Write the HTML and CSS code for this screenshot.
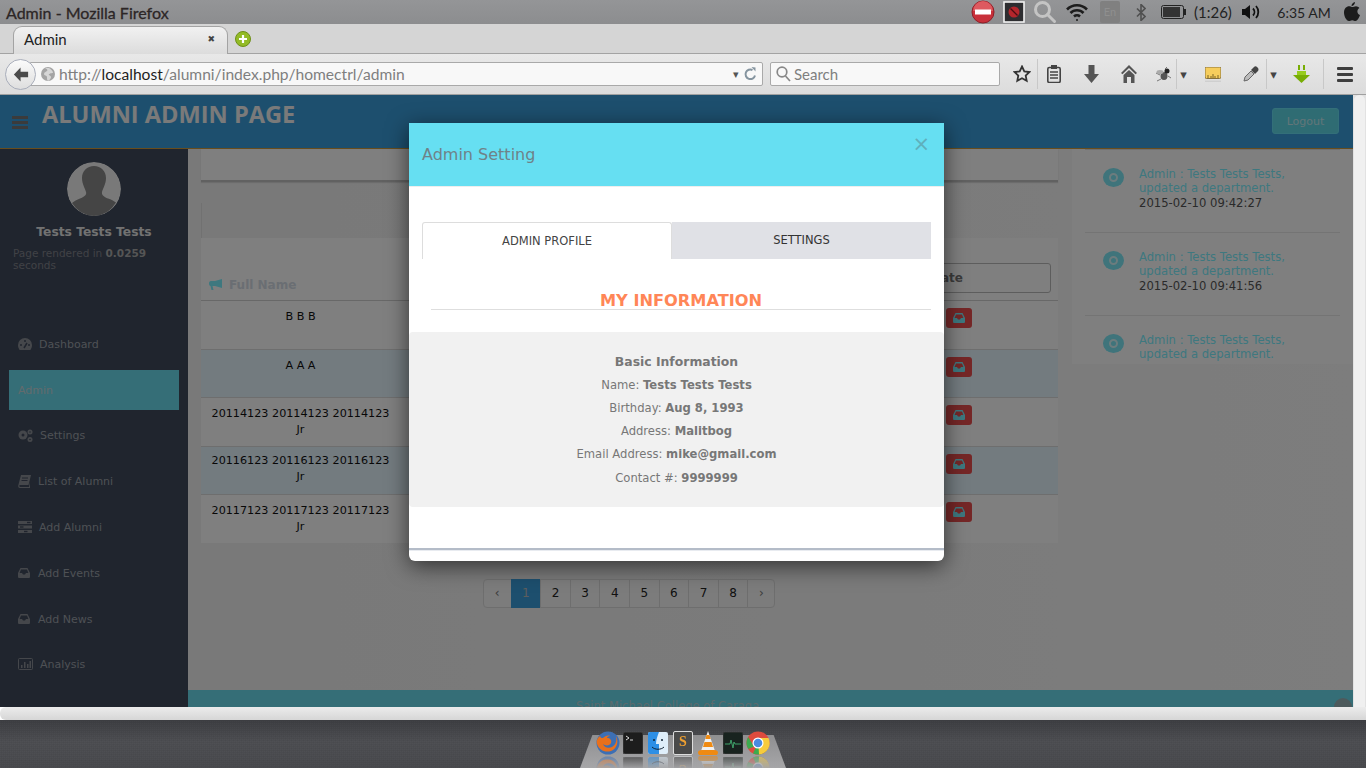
FILE: index.html
```html
<!DOCTYPE html>
<html lang="en">
<head>
<meta charset="utf-8">
<title>Admin</title>
<link rel="stylesheet" href="styles.css">
</head>
<body>
<div class="desktop">
  <header class="panel">
    <div class="panel-title">Admin - Mozilla Firefox</div>
    <div class="status">
      <span class="slot"><svg width="24" height="24" viewBox="0 0 24 24"><circle cx="12" cy="12" r="11" fill="#c8303a" stroke="#8e1f28"/><path d="M2 11a10 10 0 0 1 20 0z" fill="#dd5a60"/><rect x="4" y="9.500" width="16" height="5" fill="#fff"/></svg></span>
      <span class="slot"><svg width="22" height="22" viewBox="0 0 22 22"><rect x="1" y="1" width="20" height="20" fill="#2d2d30" stroke="#f2f2f2" stroke-width="1.600"/><circle cx="11" cy="11" r="5.500" fill="#b3262c"/><path d="M7.500 7.500l7 7" stroke="#4a0d12" stroke-width="1.300"/></svg></span>
      <span class="slot"><svg width="24" height="24" viewBox="0 0 24 24" fill="none" stroke="#c4c4c4" stroke-width="3"><circle cx="9.500" cy="9.500" r="7"/><path d="M14.500 14.500l7 7" stroke-linecap="round"/></svg></span>
      <span class="slot"><svg width="24" height="20" viewBox="0 0 24 20" fill="none" stroke="#1d1d1d" stroke-width="2.600"><path d="M2 7.500a14 14 0 0 1 20 0"/><path d="M5.500 11a9 9 0 0 1 13 0"/><path d="M9 14.500a4.500 4.500 0 0 1 6 0"/><circle cx="12" cy="18" r="1" fill="#1d1d1d" stroke="none"/></svg></span>
      <span class="slot"><span class="lang">En</span></span>
      <span class="slot"><svg width="10" height="17" viewBox="0 0 10 17" fill="none" stroke="#505050" stroke-width="1.600"><path d="M1 4.500l8 8-4 4V.5l4 4-8 8"/></svg></span>
      <span class="slot slot-battery"><svg width="25" height="14" viewBox="0 0 25 14"><rect x=".5" y=".5" width="22" height="13" rx="2" fill="none" stroke="#222"/><rect x="2" y="2" width="17" height="10" fill="#333"/><rect x="23" y="4" width="2" height="6" fill="#222"/></svg></span>
      <span class="status-text">(1:26)</span>
      <span class="slot"><svg width="20" height="18" viewBox="0 0 20 18" fill="none" stroke="#111" stroke-width="1.800"><path d="M1 6h3l5-4v14l-5-4H1z" fill="#111" stroke="none"/><path d="M12 5.500a5 5 0 0 1 0 7"/><path d="M15 3a9 9 0 0 1 0 12"/></svg></span>
      <span class="status-text status-clock">6:35 AM</span>
      <span class="slot"><svg width="16" height="20" viewBox="0 0 16 20" fill="#1c1c1c"><path d="M11 0c0 2-1.500 4-3.500 4C7.500 2 9 .5 11 0zM8 5c1.500 0 2.300-.8 4-.8 1.300 0 2.600.7 3.400 1.900-3 1.800-2.500 5.800.6 7-.8 2.400-2.600 6-4.500 6-1.200 0-1.700-.8-3.300-.8s-2.100.8-3.300.8C2.500 19 0 14.500 0 10.600 0 6.500 2.600 4.300 5 4.300c1.300 0 2.200.7 3 .7z"/></svg></span>
    </div>
  </header>

  <div class="tabstrip">
    <div class="tab"><span class="tab-label">Admin</span><span class="tab-close">✖</span></div>
    <svg class="newtab" width="16" height="16" viewBox="0 0 16 16"><circle cx="8" cy="8" r="7.500" fill="#93bb26" stroke="#6e8f18"/><path d="M8 4v8M4 8h8" stroke="#fff" stroke-width="2.200"/></svg>
  </div>

  <nav class="toolbar">
    <div class="back"><svg width="16" height="15" viewBox="0 0 18 16"><path d="M8.500 0L1 8l7.500 8v-5H17V5H8.500z" fill="#4b4b4b"/></svg></div>
    <div class="urlbar">
      <svg width="14" height="14" viewBox="0 0 14 14"><circle cx="7" cy="7" r="7" fill="#a4a4a4"/><path d="M4 1c2 1 3 2 2 3S3 5 3 7s3 1 3 3 0 3 1 4c2-1 3-3 3-4s-1-1-2-2 2-2 4-2c0-2-2-4-4-5z" fill="#d6d6d6"/></svg>
      <span class="url"><span class="url-dim">http://</span><span class="url-host">localhost</span><span class="url-dim">/alumni/index.php/homectrl/admin</span></span>
      <span class="url-caret">▾</span>
      <svg width="13" height="14" viewBox="0 0 13 14" fill="none" stroke="#85949f" stroke-width="2"><path d="M11 8.500A4.800 4.800 0 1 1 8.500 3"/><path d="M7.500 0l4 .5v4z" fill="#85949f" stroke="none"/></svg>
    </div>
    <div class="searchbar">
      <svg width="15" height="16" viewBox="0 0 15 16" fill="none" stroke="#888" stroke-width="1.700"><circle cx="6" cy="6" r="4.800"/><path d="M9.500 10l4.500 5"/></svg>
      <span>Search</span>
    </div>
    <div class="tools">
      <span class="tool t30"><svg width="18" height="18" viewBox="0 0 18 18" fill="none" stroke="#333" stroke-width="1.800"><path d="M9 1.500l2.300 4.900 5.200.6-3.800 3.600 1 5.200L9 13.300l-4.700 2.500 1-5.200L1.500 7l5.200-.6z"/></svg></span>
      <span class="tool t32 sep"><svg width="14" height="18" viewBox="0 0 14 18"><rect x=".8" y="2.500" width="12.400" height="15" rx="1.500" fill="none" stroke="#444" stroke-width="1.600"/><rect x="4" y="0" width="6" height="4" fill="#444"/><path d="M3 7h8M3 10h8M3 13h8" stroke="#444" stroke-width="1.500"/></svg></span>
      <span class="tool t44"><svg width="15" height="18" viewBox="0 0 15 18"><path d="M4.500 0h6v9H15l-7.500 9L0 9h4.500z" fill="#555"/></svg></span>
      <span class="tool t32"><svg width="16" height="18" viewBox="0 0 16 18" fill="#555"><path d="M8 0l8 8-1.500 1.200L8 3 1.500 9.200 0 8z"/><path d="M8 5l5.500 5v8H10v-6H6v6H2.500v-8z"/></svg></span>
      <span class="tool t31 tool-bug"><svg width="16" height="15" viewBox="0 0 16 15"><ellipse cx="8" cy="9" rx="3.500" ry="4" fill="#555"/><circle cx="11" cy="4" r="2.500" fill="#222"/><path d="M4 8L0 6M5 12l-4 2M12 9l3 2M9 2l2-2" stroke="#777"/><ellipse cx="4" cy="5" rx="3.500" ry="2" fill="#aaa"/></svg></span>
      <span class="tool t14 sep caret">▾</span>
      <span class="tool t46"><svg width="16" height="15" viewBox="0 0 16 15"><rect width="16" height="11.500" rx="1.500" fill="#f6cd5c" stroke="#86703a"/><path d="M3 11V8M6 11V9M8 11V7M10 11V9M13 11V8" stroke="#7a6424"/><rect y="13.500" width="16" height="1.500" fill="#cfcfcf"/></svg></span>
      <span class="tool t30"><svg width="16" height="16" viewBox="0 0 16 16"><path d="M1 15l1-4 6-6 3 3-6 6z" fill="#bbb" stroke="#666"/><path d="M8 4l3-3c1-1 2-1 3.500.5S15.500 4 15 5l-3 3z" fill="#444"/></svg></span>
      <span class="tool t14 sep caret">▾</span>
      <span class="tool t43"><svg width="17" height="18" viewBox="0 0 17 18"><path d="M5 0h2v5H5zM10 0h2v5h-2zM4 6h9v4h4l-8.500 8L0 10h4z" fill="#78ad05"/><path d="M4 6h9v4h-9z" fill="#97cc1d"/></svg></span>
      <span class="tool t43 sep"><span class="menu-lines"><i></i><i></i><i></i></span></span>
    </div>
  </nav>

  <div class="viewport">
    <div class="page">
      <div class="site-header">
        <span class="burger"><i></i><i></i><i></i></span>
        <h1 class="site-title">ALUMNI ADMIN PAGE</h1>
        <a class="logout">Logout</a>
      </div>
      <div class="site-body">
        <aside class="sidebar">
          <div class="avatar"><svg width="54" height="54" viewBox="0 0 54 54"><circle cx="27" cy="27" r="27" fill="#f2f2f2"/><path d="M27 4c7 0 12 5 12 12 0 6-3 10-4 14-.6 3 2 5 6 6.500 3 1 6 2.500 8 4A27 27 0 0 1 27 54 27 27 0 0 1 5 41c2-2 5-3.200 8-4.500 4-1.500 7-3.500 6-6.500-1-4-4-8-4-14C15 9 20 4 27 4z" fill="#8a8a8a"/></svg></div>
          <div class="user-name">Tests Tests Tests</div>
          <p class="render-note">Page rendered in <b>0.0259</b> seconds</p>
          <ul class="menu">
            <li><svg width="14" height="12" viewBox="0 0 14 12"><path d="M7 0a7 7 0 0 1 7 7c0 2-.6 3.500-1.600 5H1.600C.6 10.500 0 9 0 7a7 7 0 0 1 7-7z" fill="#8a8f96"/><circle cx="3" cy="7" r="1" fill="#40495c"/><circle cx="7" cy="3" r="1" fill="#40495c"/><circle cx="11" cy="7" r="1" fill="#40495c"/><path d="M6 10l3-5" stroke="#40495c" stroke-width="1.500"/></svg>Dashboard</li>
            <li class="active">Admin</li>
            <li><svg width="15" height="13" viewBox="0 0 15 13" fill="#8a8f96"><circle cx="5" cy="6" r="4.500"/><circle cx="12" cy="3" r="2.500"/><circle cx="12" cy="10.500" r="2.500"/><circle cx="5" cy="6" r="1.500" fill="#40495c"/><circle cx="12" cy="3" r=".8" fill="#40495c"/><circle cx="12" cy="10.500" r=".8" fill="#40495c"/></svg>Settings</li>
            <li><svg width="13" height="13" viewBox="0 0 13 13" fill="#8a8f96"><path d="M3 0h10l-2.500 10H1.500C1 12 2 12 3 12h8l1-5v6H2C0 13 0 11 .5 9.500z"/><path d="M4 3h6M3.500 5.500h6" stroke="#40495c"/></svg>List of Alumni</li>
            <li><svg width="14" height="12" viewBox="0 0 14 12" fill="#8a8f96"><rect width="14" height="3"/><rect y="4.500" width="14" height="3"/><rect y="9" width="14" height="3"/><rect x="9" y=".8" width="3.500" height="1.400" fill="#40495c"/><rect x="2" y="5.300" width="3.500" height="1.400" fill="#40495c"/><rect x="6" y="9.800" width="3.500" height="1.400" fill="#40495c"/></svg>Add Alumni</li>
            <li class="wide-gap"><svg width="12" height="10" viewBox="0 0 12 10" fill="#8a8f96"><path d="M2.500 0h7L12 5v3.500c0 1-.5 1.500-1.500 1.500h-9C.5 10 0 9.500 0 8.500V5zM3 1.500L1.600 5H4l1 1.500h2L8 5h2.400L9 1.500z"/></svg>Add Events</li>
            <li class="wide-gap"><svg width="12" height="10" viewBox="0 0 12 10" fill="#8a8f96"><path d="M2.500 0h7L12 5v3.500c0 1-.5 1.500-1.500 1.500h-9C.5 10 0 9.500 0 8.500V5zM3 1.500L1.600 5H4l1 1.500h2L8 5h2.400L9 1.500z"/></svg>Add News</li>
            <li class="last"><svg width="15" height="12" viewBox="0 0 15 12"><rect x=".5" y=".5" width="14" height="11" rx="1" fill="none" stroke="#8a8f96"/><path d="M3 10V7h1.500v3zM6 10V4h1.500v6zM9 10V6h1.500v4zM11.500 10V3H13v7z" fill="#8a8f96"/></svg>Analysis</li>
          </ul>
        </aside>
        <main class="main">
          <div class="columns">
            <section class="col-main">
              <div class="top-card"></div>
              <div class="table-panel">
                <div class="panel-band"></div>
                <table class="people">
                  <thead>
                    <tr>
                      <th class="name-head"><svg width="13" height="11" viewBox="0 0 13 11" fill="#7cf0ff"><path d="M13 0v9L6 7H3.500l1 4H2.500L1.500 7C.5 7 0 6 0 4.500S.5 2 2 2h4z"/></svg>Full Name</th>
                      <th></th>
                      <th class="update-head"><span class="update-btn">Update</span></th>
                    </tr>
                  </thead>
                  <tbody>
                    <tr><td class="name">B B B</td><td></td><td class="act"><span class="del"><svg width="12" height="10" viewBox="0 0 12 10" fill="#7cf0ff"><path d="M2.500 0h7L12 5v3.500c0 1-.5 1.500-1.500 1.500h-9C.5 10 0 9.500 0 8.500V5zM3 1.500L1.600 5H4l1 1.500h2L8 5h2.400L9 1.500z"/></svg></span></td></tr>
                    <tr class="tint"><td class="name">A A A</td><td></td><td class="act"><span class="del"><svg width="12" height="10" viewBox="0 0 12 10" fill="#7cf0ff"><path d="M2.500 0h7L12 5v3.500c0 1-.5 1.500-1.500 1.500h-9C.5 10 0 9.500 0 8.500V5zM3 1.500L1.600 5H4l1 1.500h2L8 5h2.400L9 1.500z"/></svg></span></td></tr>
                    <tr><td class="name">20114123 20114123 20114123 Jr</td><td></td><td class="act"><span class="del"><svg width="12" height="10" viewBox="0 0 12 10" fill="#7cf0ff"><path d="M2.500 0h7L12 5v3.500c0 1-.5 1.500-1.500 1.500h-9C.5 10 0 9.500 0 8.500V5zM3 1.500L1.600 5H4l1 1.500h2L8 5h2.400L9 1.500z"/></svg></span></td></tr>
                    <tr class="tint tight"><td class="name">20116123 20116123 20116123 Jr</td><td></td><td class="act"><span class="del"><svg width="12" height="10" viewBox="0 0 12 10" fill="#7cf0ff"><path d="M2.500 0h7L12 5v3.500c0 1-.5 1.500-1.500 1.500h-9C.5 10 0 9.500 0 8.500V5zM3 1.500L1.600 5H4l1 1.500h2L8 5h2.400L9 1.500z"/></svg></span></td></tr>
                    <tr><td class="name">20117123 20117123 20117123 Jr</td><td></td><td class="act"><span class="del"><svg width="12" height="10" viewBox="0 0 12 10" fill="#7cf0ff"><path d="M2.500 0h7L12 5v3.500c0 1-.5 1.500-1.500 1.500h-9C.5 10 0 9.500 0 8.500V5zM3 1.500L1.600 5H4l1 1.500h2L8 5h2.400L9 1.500z"/></svg></span></td></tr>
                  </tbody>
                </table>
              </div>
              <ul class="pager">
                <li class="edge">‹</li><li class="current">1</li><li>2</li><li>3</li><li>4</li><li>5</li><li>6</li><li>7</li><li>8</li><li class="edge">›</li>
              </ul>
            </section>
            <aside class="feed">
              <div class="feed-item">
                <span class="feed-dot"><i></i></span>
                <div class="feed-text"><a>Admin : Tests Tests Tests, updated a department.</a><time>2015-02-10 09:42:27</time></div>
              </div>
              <div class="feed-item">
                <span class="feed-dot"><i></i></span>
                <div class="feed-text"><a>Admin : Tests Tests Tests, updated a department.</a><time>2015-02-10 09:41:56</time></div>
              </div>
              <div class="feed-item">
                <span class="feed-dot"><i></i></span>
                <div class="feed-text"><a>Admin : Tests Tests Tests, updated a department.</a></div>
              </div>
            </aside>
          </div>
          <footer class="site-footer">Saint Michael College of Caraga<span class="to-top"></span></footer>
        </main>
      </div>
      <div class="backdrop"></div>
      <div class="modal">
        <div class="modal-head"><h2>Admin Setting</h2><span class="modal-x">×</span></div>
        <div class="modal-body">
          <div class="tabs">
            <div class="mtab on">ADMIN PROFILE</div>
            <div class="mtab">SETTINGS</div>
          </div>
          <h3 class="info-title">MY INFORMATION</h3>
          <div class="info">
            <p class="info-head"><b>Basic Information</b></p>
            <p>Name: <b>Tests Tests Tests</b></p>
            <p>Birthday: <b>Aug 8, 1993</b></p>
            <p>Address: <b>Malitbog</b></p>
            <p>Email Address: <b>mike@gmail.com</b></p>
            <p>Contact #: <b>9999999</b></p>
          </div>
        </div>
        <div class="modal-foot"></div>
      </div>
    </div>
    <div class="vscroll"><span class="vthumb"></span></div>
  </div>
  <div class="hscroll"></div>

  <div class="dock">
    <div class="dock-wrap">
      <div class="shelf"></div>
      <div class="dock-icons">
        <span class="dock-icon"><svg width="24" height="24" viewBox="0 0 24 24"><circle cx="12" cy="12" r="11.500" fill="#3d6fb4"/><path d="M4 5c1 2 1 2 3 2 2-2 5-3 7-2-2 0-3 1-3 2 3 0 5 2 4 5-1 3-6 3-8 1 1 3 5 5 9 3 4-2 5-7 4-11 3 5 1 13-5 15-6 2-12-1-14-7-1-3 0-6 3-8z" fill="#e8701c"/></svg></span>
        <span class="dock-icon"><svg width="20" height="22" viewBox="0 0 20 22"><rect width="20" height="22" rx="2" fill="#1d1d1d" stroke="#444"/><path d="M3 4l3 2-3 2" fill="none" stroke="#ddd"/><path d="M7 8h3" stroke="#ddd"/></svg></span>
        <span class="dock-icon"><svg width="20" height="22" viewBox="0 0 20 22"><rect width="20" height="22" rx="2" fill="#dfeefa"/><path d="M0 2a2 2 0 0 1 2-2h9c-2 5-3 8-3 12h3v10H2a2 2 0 0 1-2-2z" fill="#2d8fe6"/><circle cx="6" cy="8" r="1" fill="#123"/><circle cx="14" cy="8" r="1" fill="#123"/><path d="M4 15c3 3 9 3 12 0" fill="none" stroke="#123"/></svg></span>
        <span class="dock-icon"><span class="sublime">S</span></span>
        <span class="dock-icon"><svg width="22" height="24" viewBox="0 0 22 24"><path d="M11 0l7 20H4z" fill="#f0f0f0"/><path d="M9.500 4h3l1.200 4h-5.400zM7.500 11h7l1.500 5H6z" fill="#ef8a12"/><path d="M1 22c0-2 1-3 4-3h12c3 0 4 1 4 3l-1 2H2z" fill="#ef8a12"/></svg></span>
        <span class="dock-icon"><svg width="20" height="22" viewBox="0 0 20 22"><rect width="20" height="22" rx="2" fill="#18231f" stroke="#3a3a3a"/><path d="M2 12h5l1-4 2 8 1-6 1 2h6" fill="none" stroke="#3fa26a"/></svg></span>
        <span class="dock-icon"><svg width="24" height="24" viewBox="0 0 24 24"><circle cx="12" cy="12" r="11.500" fill="#dd4b3e"/><path d="M12 12L22 17.500A11.500 11.500 0 0 1 7 22.400z" fill="#3cab4f"/><path d="M12 7h10.500A11.500 11.500 0 0 1 13 23.500z" fill="#f7cb3c"/><path d="M2.200 6L8 15.500 2.300 18A11.500 11.500 0 0 1 2.200 6z" fill="#3cab4f"/><circle cx="12" cy="12" r="5.500" fill="#fff"/><circle cx="12" cy="12" r="4.300" fill="#4a8adf"/></svg></span>
      </div>
    </div>
  </div>
</div>
</body>
</html>
```

FILE: styles.css
```css
* { box-sizing: border-box; }
html, body { margin: 0; padding: 0; height: 100%; overflow: hidden; }
body { font-family: "DejaVu Sans", sans-serif; font-size: 12px; }
p, h1, h2, h3, ul { margin: 0; padding: 0; }
ul { list-style: none; }
svg { display: block; flex: none; }

.desktop { width: 1366px; height: 768px; display: flex; flex-direction: column; overflow: hidden; }

/* OS panel */
.panel { height: 24px; flex: none; display: flex; align-items: center; justify-content: space-between; background: linear-gradient(#949597, #8c8d8f); }
.panel-title { padding-left: 6px; font: 16px "Lato", sans-serif; color: #2c2626; -webkit-text-stroke: .3px #2c2626; }
.status { display: grid; grid-template-columns: 30px 32px 30px 34px 32px 30px 38px 36px 42px 64px 32px; width: 398px; height: 24px; align-items: center; }
.slot { display: flex; justify-content: center; align-items: center; }
.slot-battery { padding-right: 4px; }
.status-text { font: 15px "Lato", sans-serif; color: #222; white-space: nowrap; text-align: center; }
.status-clock { font-size: 14px; }
.lang { width: 20px; height: 22px; background: #808080; border-radius: 2px; color: #8f8f8f; font: 11px/22px "Lato", sans-serif; text-align: center; }

/* Tabs */
.tabstrip { height: 30px; flex: none; display: flex; align-items: flex-end; background: #d5d5d5; border-bottom: 1px solid #a3a3a3; position: relative; }
.tab { width: 215px; height: 28px; margin-left: 13px; margin-bottom: -1px; display: flex; align-items: center; justify-content: space-between; padding: 0 12px 3px 10px; background: linear-gradient(#f1f1f1, #dcdcdc); border: 1px solid #a3a3a3; border-bottom: 0; border-radius: 9px 9px 0 0; }
.tab-label { font: 15px "Lato", sans-serif; color: #222; }
.tab-close { font-size: 9px; color: #444; }
.newtab { margin: 0 0 6px 7px; }

/* Toolbar */
.toolbar { height: 41px; flex: none; display: flex; align-items: center; background: linear-gradient(#e8e8e8, #dcdcdc); border-bottom: 1px solid #a0a0a0; position: relative; }
.back { width: 31px; height: 31px; margin-left: 5px; border-radius: 50%; border: 1px solid #a9aebb; background: linear-gradient(#fbfbfb, #dedede); display: flex; align-items: center; justify-content: center; position: relative; z-index: 1; flex: none; }
.urlbar { width: 733px; height: 24px; margin-left: -6px; padding: 0 5px 0 10px; display: flex; align-items: center; background: #f8f8f8; border: 1px solid #a9a9a9; border-radius: 0 2px 2px 0; font: 15.600px/22px "Lato", sans-serif; }
.url { margin-left: 4px; flex: 1; white-space: nowrap; }
.url-dim { color: #7f7f7f; }
.url-host { color: #1e1e1e; }
.url-caret { font-size: 11px; color: #555; margin-right: 5px; }
.searchbar { width: 230px; height: 24px; margin-left: 7px; padding-left: 5px; display: flex; align-items: center; gap: 3px; background: #f8f8f8; border: 1px solid #a9a9a9; border-radius: 2px; font: 15px "Lato", sans-serif; color: #7f7f7f; }
.tools { display: flex; margin-left: 7px; align-items: center; height: 30px; }
.tool { display: flex; justify-content: center; align-items: center; height: 30px; flex: none; }
.sep { border-left: 1px solid #c8c8c8; }
.t14 { width: 14px; } .t30 { width: 30px; } .t31 { width: 31px; } .t32 { width: 32px; }
.t43 { width: 43px; } .t44 { width: 44px; } .t46 { width: 46px; }
.tool-bug { padding-left: 6px; }
.caret { font-size: 13px; color: #444; }
.menu-lines { display: flex; flex-direction: column; gap: 3px; width: 16px; }
.menu-lines i { height: 3px; background: #3e3e3e; border-radius: 1px; }

/* Browser viewport */
.viewport { height: 612px; flex: none; display: flex; position: relative; overflow: hidden; }
.page { width: 1353px; flex: none; overflow: hidden; }
.vscroll { width: 13px; background: #e2e2e2; padding: 0 1px; }
.vthumb { display: block; height: 612px; background: #f0f0f0; border-radius: 6px 6px 0 0; }
.hscroll { height: 13px; flex: none; background: linear-gradient(#ececec, #d6d6d6); border-radius: 6px 0 0 6px; }

.site-header { height: 54px; display: flex; align-items: flex-start; background: #3b9fdc; border-bottom: 1px solid #d09a3a; position: relative; }
.burger { display: flex; flex-direction: column; gap: 2px; width: 16px; margin: 21px 0 0 12px; }
.burger i { height: 3px; background: #777; }
.site-title { margin: 4px 0 0 14px; font: bold 23.600px/30px "Open Sans", sans-serif; color: #f4f4f4; white-space: nowrap; }
.logout { margin: 13px 14px 0 auto; width: 67px; height: 26px; border-radius: 3px; background: #5fd8e6; border: 1px solid #66dff2; color: #c4ecf2; font-size: 11px; line-height: 26px; text-align: center; }

.site-body { display: flex; height: 558px; }
.sidebar { width: 188px; flex: none; background: #404a5c; padding-top: 13px; }
.avatar { width: 54px; height: 54px; margin: 0 auto; border-radius: 50%; overflow: hidden; }
.user-name { margin-top: 8px; text-align: center; font-weight: bold; font-size: 12.300px; line-height: 17px; color: #e4e4e4; }
.render-note { margin: 6px 0 0 13px; width: 150px; font-size: 10.500px; line-height: 12px; color: #80848c; }
.render-note b { color: #aaa; }
.menu { margin-top: 50px; padding: 0 9px; font-size: 11px; color: #9da2aa; }
.menu li { height: 46px; display: flex; align-items: center; gap: 7px; padding-left: 9px; }
.menu li.wide-gap { gap: 8px; }
.menu li.last { height: 44px; }
.menu li.active { height: 40px; margin: 3px 0 2px; background: #6adcee; color: #c5d7db; }

.main { flex: 1; display: flex; flex-direction: column; min-width: 0; background: linear-gradient(to right, #f2f2f2, #fafafa); }
.columns { height: 541px; flex: none; display: flex; padding-left: 13px; gap: 14px; }
.col-main { width: 857px; flex: none; }
.top-card { height: 33px; background: #fff; border-bottom: 2px solid #c2c2c2; box-shadow: 0 1px 1px #d8d8d8; }
.table-panel { margin-top: 21px; }
.panel-band { height: 35px; border-left: 1px solid #e2e2e2; }
.people { width: 857px; border-collapse: collapse; table-layout: fixed; background: #fff; }
.people th { height: 62px; padding: 0; vertical-align: bottom; border-bottom: 1px solid #d0d0d0; }
.people th:first-child { width: 199px; }
.people th:last-child { width: 113px; }
.name-head { font-weight: bold; text-align: left; color: #d4dce6; padding: 0 0 8px 8px !important; }
.name-head svg { display: inline-block; margin-right: 7px; vertical-align: -1px; }
.update-head { padding: 0 7px 7px 0 !important; }
.update-btn { display: block; height: 30px; margin-left: -80px; border: 1px solid #bbb; border-radius: 3px; text-align: right; padding-right: 87px; line-height: 28px; color: #777; white-space: nowrap; }
.people td { height: 49px; padding: 8px 8px 5px; vertical-align: top; border-bottom: 1px solid #ddd; line-height: 16.600px; font-size: 11.200px; color: #111; }
.people .tint td { height: 48px; background: #e6f6ff; padding-bottom: 4px; }
.people .tight td.name { padding-top: 6px; }
.people tr:last-child td { border-bottom: 0; }
.name { text-align: center; }
.people td.act { padding: 7px 0 0 1px; }
.del { display: flex; width: 26px; height: 20px; align-items: center; justify-content: center; background: #ea4f4f; border-radius: 3px; }
.pager { display: flex; justify-content: center; margin-top: 36px; font-size: 12px; color: #222; }
.pager li { width: 30.600px; height: 29px; line-height: 27px; text-align: center; background: #f8f8f8; border: 1px solid #ddd; margin-left: -1px; }
.pager li.edge { width: 28px; color: #777; }
.pager li:first-child { width: 29px; border-radius: 4px 0 0 4px; }
.pager li:last-child { border-radius: 0 4px 4px 0; }
.pager li.current { background: #3b9fdc; border-color: #3b9fdc; color: #bbb; }

.feed { flex: 1; height: 215px; overflow: hidden; background: #ffffff; padding: 0 13px; }
.feed-item { height: 83px; display: flex; padding: 17px 0 0 18px; gap: 15px; border-bottom: 1px solid #e8e8e8; font-size: 11.600px; }
.feed-item:first-child { height: 84px; padding-top: 17px; border-top: 1px solid #e0e0e0; }
.feed-text { width: 170px; }
.feed-item a { display: block; color: #7cf0ff; line-height: 14px; }
.feed-item time { display: block; color: #555; line-height: 15px; margin-top: 1px; }
.feed-dot { width: 21px; height: 19px; margin-top: 1px; flex: none; border-radius: 50%; background: #7ee8f6; display: flex; align-items: center; justify-content: center; }
.feed-dot i { width: 9px; height: 9px; border: 2px solid #fff; border-radius: 50%; opacity: .7; }

.site-footer { height: 40px; flex: none; padding: 9px 0 0 388px; background: #6adcee; color: #b9d4d8; font-size: 11.500px; line-height: 15px; position: relative; }
.to-top { position: absolute; left: 1146px; top: 8px; width: 18px; height: 18px; border-radius: 50%; background: #9ab4b8; }

/* Modal */
.backdrop { position: absolute; left: 0; top: 0; width: 1353px; height: 612px; background: rgba(0, 0, 0, .5); }
.modal { position: absolute; left: 409px; top: 28px; width: 535px; height: 438px; background: #fff; border-radius: 0 0 6px 6px; box-shadow: 0 5px 22px rgba(0, 0, 0, .6); overflow: hidden; display: flex; flex-direction: column; }
.modal-head { height: 63px; flex: none; background: #66dff2; padding: 0 13px; position: relative; }
.modal-head h2 { font-weight: normal; font-size: 16px; line-height: 64px; color: #6f8288; }
.modal-x { position: absolute; right: 14px; top: 11px; font-size: 21px; line-height: 20px; color: #5fb0bc; }
.modal-body { height: 362px; flex: none; padding-top: 35px; border-top: 1px solid #eee; }
.tabs { display: flex; margin: 0 13px; height: 37px; font-size: 11.500px; }
.mtab { flex: 1; text-align: center; line-height: 37px; background: #e0e1e6; color: #333; }
.mtab.on { width: 250px; flex: none; background: #fff; border: 1px solid #ddd; border-bottom: 0; border-radius: 3px 3px 0 0; color: #444; line-height: 36px; }
.info-title { margin: 31px 13px 0 22px; border-bottom: 1px solid #dedede; text-align: center; font-size: 16.200px; line-height: 21px; font-weight: bold; color: #ff8657; height: 20px; }
.info { margin-top: 22px; height: 175px; padding-top: 19px; background: #f1f1f1; border-radius: 4px; text-align: center; font-size: 11.600px; color: #777; }
.info p { line-height: 23px; }
.info .info-head { font-size: 12.400px; line-height: 21px; margin-bottom: 2px; }
.info p:last-child { margin-top: 1px; }
.modal-foot { flex: 1; border-top: 2px solid #b4bcc8; box-shadow: inset 0 1px 0 #e8ebf0; }

/* Dock */
.dock { flex: 1; display: flex; justify-content: center; background: repeating-linear-gradient(90deg, rgba(255,255,255,.012) 0 1px, rgba(0,0,0,.012) 1px 2px), repeating-linear-gradient(0deg, rgba(255,255,255,.012) 0 1px, rgba(0,0,0,.012) 1px 2px), linear-gradient(#3b3c40, #4b4c50 45%, #47484c); }
.dock-wrap { width: 206px; height: 48px; position: relative; }
.shelf { position: absolute; left: 0; right: 0; top: 15px; bottom: 0; background: linear-gradient(#8f8f91, #a6a6a8); clip-path: polygon(6% 0, 94% 0, 100% 100%, 0 100%); }
.dock-icons { position: relative; display: flex; justify-content: center; align-items: flex-start; padding-top: 11px; width: 204px; margin-left: 1px; }
.dock-icon { width: 25px; height: 24px; display: flex; align-items: center; justify-content: center; -webkit-box-reflect: below 1px linear-gradient(transparent 45%, rgba(255, 255, 255, .55)); }
.sublime { display: block; width: 20px; height: 24px; border: 1px solid #ddd; border-radius: 2px; background: #4a4a4a; color: #f0a030; font: bold 14px/20px "Liberation Serif", serif; text-align: center; }
```
